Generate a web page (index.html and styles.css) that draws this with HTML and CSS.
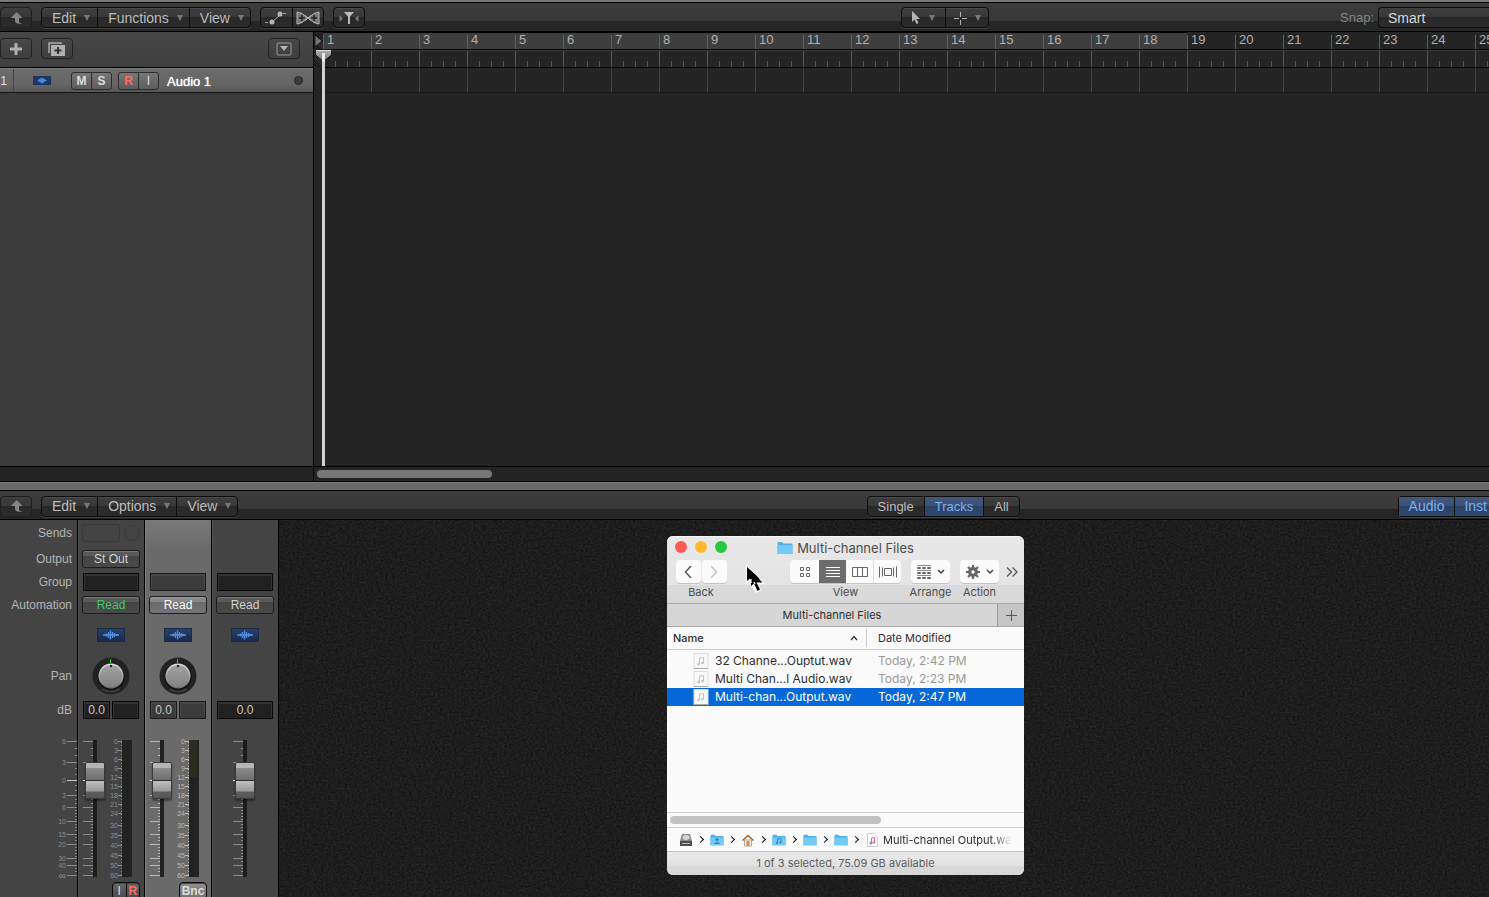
FILE: index.html
```html
<!DOCTYPE html>
<html lang="en">
<head>
  <meta charset="UTF-8" />
  <meta name="viewport" content="width=device-width, initial-scale=1.0" />
  <title>Tracks</title>
  <link rel="stylesheet" href="styles.css">
</head>
<body>

  <!-- shared drawings -->
  <svg class="defs" width="0" height="0" aria-hidden="true">
    <defs>
      <linearGradient id="knobFill" x1="0" y1="0" x2="0" y2="1">
        <stop offset="0" stop-color="#a2a2a2" />
        <stop offset="1" stop-color="#828282" />
      </linearGradient>
      <linearGradient id="knobRim" x1="0" y1="0" x2="0" y2="1">
        <stop offset="0" stop-color="#e8e8e8" />
        <stop offset="1" stop-color="#6c6c6c" />
      </linearGradient>
      <linearGradient id="waveFill" x1="0" y1="0" x2="0" y2="1">
        <stop offset="0" stop-color="#2a416c" />
        <stop offset="1" stop-color="#182a4a" />
      </linearGradient>
      <linearGradient id="headFill" x1="0" y1="0" x2="0" y2="1">
        <stop offset="0" stop-color="#b4b4b4" />
        <stop offset="1" stop-color="#747474" />
      </linearGradient>
      <filter id="leather" x="0" y="0" width="100%" height="100%" color-interpolation-filters="sRGB">
        <feTurbulence type="fractalNoise" baseFrequency="0.42 0.5" numOctaves="2" seed="4" />
        <feColorMatrix values="0.12 0 0 0 0.055  0.12 0 0 0 0.055  0.12 0 0 0 0.055  0 0 0 0 1" />
      </filter>
    </defs>
    <symbol id="up" viewBox="0 0 14 14">
      <path d="M7.500 1 L13.500 7 H10 V10 Q10 12 13.500 12.500 Q6 13.500 6 9.500 V7 H2 Z" fill="#858585" />
    </symbol>
    <symbol id="wave" viewBox="0 0 28 14">
      <rect x="0.500" y="0.500" width="27" height="13" fill="url(#waveFill)" stroke="#1c2a45" />
      <path d="M7.500 6.500v1M9.500 5.500v3M11.500 4v6M13.500 2.500v9M15.500 4v6M17.500 5v4M19.500 6v2M6 7h16" stroke="#5590e0" stroke-width="1.300" fill="none" />
    </symbol>
    <symbol id="knob" viewBox="0 0 38 38">
      <circle cx="19" cy="19" r="18.500" fill="#222" />
      <path d="M10 33 Q19 38 28 33 L26 30 H12 Z" fill="#3c3c3c" />
      <circle cx="19" cy="20" r="13.500" fill="#111" />
      <circle cx="19" cy="19" r="12.500" fill="url(#knobRim)" />
      <circle cx="19" cy="19" r="11" fill="url(#knobFill)" />
      <rect x="18" y="2" width="1" height="4" fill="#1fd01f" />
      <circle cx="19" cy="9" r="1.200" fill="#222" />
    </symbol>
    <symbol id="faderTicks" viewBox="0 0 10 160">
      <path d="M0 21.500h10M0 42.500h10M0 75.500h10M0 87.500h10M0 101.500h10M0 114.500h10M0 124.500h10M0 138.500h10M0 145.500h10M0 155.500h10" stroke="currentColor" />
      <path d="M8 28.500h2M8 35.500h2M8 48.500h2M8 54.500h2M8 65.500h2M8 70.500h2M8 79.500h2M8 83.500h2M8 90.500h2M8 93.500h2M8 96.500h2M8 99.500h2M8 104.500h2M8 107.500h2M8 110.500h2M8 117.500h2M8 120.500h2M8 127.500h2M8 130.500h2M8 133.500h2M8 136.500h2M8 141.500h2M8 148.500h2M8 151.500h2" stroke="currentColor" />
    </symbol>
    <symbol id="meterTicks" viewBox="0 0 4 160">
      <path d="M0 21.500h4M0 30.500h4M0 39.500h4M0 48.500h4M0 57.500h4M0 66.500h4M0 75.500h4M0 84.500h4M0 93.500h4M0 105.500h4M0 115.500h4M0 125.500h4M0 135.500h4M0 145.500h4M0 155.500h4" stroke="currentColor" />
      <path d="M3.500 22v134" stroke="currentColor" stroke-dasharray="1 2" />
    </symbol>
    <symbol id="folder" viewBox="0 0 16 14">
      <path d="M0.500 2 Q0.500 1 1.500 1 H5 L6.500 2.500 H14.500 Q15.500 2.500 15.500 3.500 V13 H0.500 Z" fill="#54aee0" />
      <path d="M0.500 4.200 H15.500 V13 H0.500 Z" fill="#72cbf7" />
    </symbol>
    <symbol id="note" viewBox="0 0 16 16">
      <rect x="1" y="0.500" width="14" height="15" fill="#f8f8f8" stroke="#dcdcdc" />
      <path d="M1 15.500h14" stroke="#aaa" />
      <path d="M6.500 11V5L10.500 4.500V10" fill="none" stroke="#c4c4c4" />
      <circle cx="5.500" cy="11" r="1.300" fill="#c4c4c4" /><circle cx="9.500" cy="10" r="1.300" fill="#c4c4c4" />
    </symbol>
  </svg>

  <header class="toolbar">
    <div class="tools-left">
      <button class="btn up" aria-label="Up"><svg width="14" height="14"><use href="#up" /></svg></button>
      <div class="group menus">
        <button>Edit<i></i></button>
        <button>Functions<i></i></button>
        <button>View<i></i></button>
      </div>
      <div class="group icons">
        <button aria-label="Automation">
          <svg width="24" height="14" viewBox="0 0 24 14"><path d="M1 11.500H4M19 2.500H23" stroke="#999" stroke-dasharray="3 1" fill="none" /><path d="M7 11.500L17 3.500" stroke="#aaa" /><circle cx="8" cy="11" r="2.500" fill="#b5b5b5" /><circle cx="16" cy="3" r="2.500" fill="#b5b5b5" /></svg>
        </button>
        <button aria-label="Flex">
          <svg width="24" height="14" viewBox="0 0 24 14"><path d="M1 1C8 1 16 13 23 13V1C16 1 8 13 1 13Z" fill="#777" stroke="#b5b5b5" /><path d="M3 7h6M15 7h6M6 4v6M18 4v6" stroke="#222" stroke-width="1.500" /><path d="M9 4.500L12 7L9 9.500M15 4.500L12 7L15 9.500" stroke="#bbb" fill="none" /></svg>
        </button>
      </div>
      <button class="btn" aria-label="Catch">
        <svg width="20" height="14" viewBox="0 0 20 14"><path d="M5 1H15L11 5.500V13H9V5.500Z" fill="#bbb" /><path d="M0.500 4V11L4 7.500ZM19.500 4V11L16 7.500Z" fill="#777" /></svg>
      </button>
    </div>
    <div class="group tools">
      <button aria-label="Pointer tool">
        <svg width="10" height="14" viewBox="0 0 10 14"><path d="M1 0V11L3.500 8.500L5.500 13L7.500 12L5.500 8H9Z" fill="#b5b5b5" /></svg><i></i>
      </button>
      <button aria-label="Marquee tool">
        <svg width="14" height="14" viewBox="0 0 14 14"><path d="M7.500 1v5M7.500 9v5M1 7.500h5M9 7.500h5" stroke="#b5b5b5" /></svg><i></i>
      </button>
    </div>
    <div class="snap">
      <label for="snap">Snap:</label>
      <select id="snap"><option>Smart</option></select>
    </div>
  </header>

  <main class="arrange">
    <section class="track-list">
      <div class="list-head">
        <button class="btn" aria-label="Add track"><svg width="14" height="14" viewBox="0 0 14 14"><path d="M7 1v12M1 7h12" stroke="#b0b0b0" stroke-width="3" /></svg></button>
        <button class="btn dup" aria-label="Duplicate track"><svg width="18" height="14" viewBox="0 0 18 14"><path d="M1 11V1H14" stroke="#aaa" fill="none" stroke-width="1.500" /><rect x="3" y="3" width="14" height="11" fill="#b0b0b0" /><path d="M10 5v7M6.500 8.500h7" stroke="#333" stroke-width="2" /></svg></button>
        <button class="btn drop" aria-label="Track header options"><svg width="16" height="14" viewBox="0 0 16 14"><rect x="1" y="1" width="14" height="12" rx="1" fill="none" stroke="#999" /><path d="M4 4H12L8 9Z" fill="#b5b5b5" /></svg></button>
      </div>
      <div class="track">
        <span class="num">1</span>
        <svg class="track-icon" width="18" height="9" viewBox="0 0 18 9"><rect width="18" height="9" fill="#1d355f" /><path d="M4 4.500L9 1.500L14 4.500L9 7.500Z" fill="#4686df" /></svg>
        <div class="group ms"><button>M</button><button>S</button></div>
        <div class="group ri"><button class="rec">R</button><button>I</button></div>
        <span class="track-name">Audio 1</span>
        <span class="dot"></span>
      </div>
    </section>

    <section class="timeline">
      <div class="ruler">
        <ol class="bars cycle"><li>1</li><li>2</li><li>3</li><li>4</li><li>5</li><li>6</li><li>7</li><li>8</li><li>9</li><li>10</li><li>11</li><li>12</li><li>13</li><li>14</li><li>15</li><li>16</li><li>17</li><li>18</li></ol>
        <ol class="bars"><li>19</li><li>20</li><li>21</li><li>22</li><li>23</li><li>24</li><li>25</li></ol>
      </div>
      <div class="beats"></div>
      <div class="lane"></div>
      <svg class="start-mark" width="9" height="34" viewBox="0 0 9 34"><path d="M1 2V14L8 8Z" fill="#777" stroke="#161616" /></svg>
      <div class="playhead">
        <svg width="17" height="13" viewBox="0 0 17 13"><path d="M0.500 0.500H16.500V6L8.500 12.500L0.500 6Z" fill="url(#headFill)" stroke="#161616" /><path d="M1 1.500H16" stroke="#ddd" /><rect x="7" y="4" width="3" height="9" fill="#e8e8e8" /></svg>
      </div>
    </section>
  </main>

  <div class="scroll-row"><div class="scroll-side"></div><div class="scroll-track"><div class="thumb"></div></div></div>
  <div class="splitter"></div>

  <header class="toolbar mixer-bar">
    <div class="tools-left">
      <button class="btn up" aria-label="Up"><svg width="14" height="14"><use href="#up" /></svg></button>
      <div class="group menus">
        <button>Edit<i></i></button>
        <button>Options<i></i></button>
        <button>View<i></i></button>
      </div>
    </div>
    <div class="group tabs">
      <button>Single</button><button class="on">Tracks</button><button>All</button>
    </div>
    <div class="group filters"><button class="on">Audio</button><button class="on">Inst</button></div>
  </header>

  <section class="mixer">
    <svg class="leather" aria-hidden="true"><rect width="100%" height="100%" filter="url(#leather)" /></svg>

    <div class="strip labels">
      <div class="r-sends">Sends</div>
      <div class="r-output">Output</div>
      <div class="r-group">Group</div>
      <div class="r-auto">Automation</div>
      <div class="r-icon"></div>
      <div class="r-pan">Pan</div>
      <div class="r-db">dB</div>
      <svg class="scale" width="77" height="160" viewBox="0 0 77 160">
        <text x="66" y="24">6</text><text x="66" y="45">3</text><text x="66" y="63">0</text><text x="66" y="78">3</text>
        <text x="66" y="90">6</text><text x="66" y="104">10</text><text x="66" y="117">15</text><text x="66" y="127">20</text>
        <text x="66" y="141">30</text><text x="66" y="148">40</text><text class="inf" x="66" y="159">∞</text>
        <use href="#faderTicks" x="67" width="10" height="160" />
        <path d="M67 60.500h10" stroke="#ccc" />
      </svg>
    </div>

    <div class="strip">
      <div class="r-sends"><span class="send"></span><span class="send-knob"></span></div>
      <div class="r-output"><button class="slot">St Out</button></div>
      <div class="r-group"><span class="field"></span></div>
      <div class="r-auto"><button class="slot read">Read</button></div>
      <div class="r-icon"><svg width="28" height="14"><use href="#wave" /></svg></div>
      <div class="r-pan"><svg width="38" height="38"><use href="#knob" /></svg></div>
      <div class="r-db"><span class="field">0.0</span><span class="field"></span></div>
      <div class="fader">
        <svg width="66" height="160">
          <use href="#faderTicks" x="5" width="10" height="160" />
          <path d="M5 60.500h5" stroke="#fff" />
          <rect x="15" y="20" width="4" height="137" fill="#1c1c1c" />
          <text x="40" y="24">0</text><text x="40" y="33">3</text><text x="40" y="42">6</text>
          <text x="40" y="51">9</text><text x="40" y="60">12</text><text x="40" y="69">15</text>
          <text x="40" y="78">18</text><text x="40" y="87">21</text><text x="40" y="96">24</text>
          <text x="40" y="108">30</text><text x="40" y="118">35</text><text x="40" y="128">40</text>
          <text x="40" y="138">45</text><text x="40" y="148">50</text><text x="40" y="158">60</text>
          <use href="#meterTicks" x="40" width="4" height="160" />
          <rect x="44" y="20" width="10" height="137" fill="#222" />
        </svg>
        <input type="range" min="0" max="100" value="78" aria-label="Audio 1 volume">
      </div>
      <div class="r-foot"><div class="group"><button>I</button><button class="rec">R</button></div></div>
    </div>

    <div class="strip selected">
      <div class="r-sends"></div>
      <div class="r-output"></div>
      <div class="r-group"><span class="field"></span></div>
      <div class="r-auto"><button class="slot">Read</button></div>
      <div class="r-icon"><svg width="28" height="14"><use href="#wave" /></svg></div>
      <div class="r-pan"><svg width="38" height="38"><use href="#knob" /></svg></div>
      <div class="r-db"><span class="field">0.0</span><span class="field"></span></div>
      <div class="fader">
        <svg width="66" height="160">
          <use href="#faderTicks" x="5" width="10" height="160" />
          <path d="M5 60.500h5" stroke="#fff" />
          <rect x="15" y="20" width="4" height="137" fill="#222" />
          <text x="40" y="24">0</text><text x="40" y="33">3</text><text x="40" y="42">6</text>
          <text x="40" y="51">9</text><text x="40" y="60">12</text><text x="40" y="69">15</text>
          <text x="40" y="78">18</text><text x="40" y="87">21</text><text x="40" y="96">24</text>
          <text x="40" y="108">30</text><text x="40" y="118">35</text><text x="40" y="128">40</text>
          <text x="40" y="138">45</text><text x="40" y="148">50</text><text x="40" y="158">60</text>
          <use href="#meterTicks" x="40" width="4" height="160" />
          <rect x="44" y="20" width="10" height="137" fill="#222" />
          <rect x="44" y="20" width="8" height="37" fill="#2c2b20" />
        </svg>
        <input type="range" min="0" max="100" value="78" aria-label="Output volume">
      </div>
      <div class="r-foot"><div class="group"><button>Bnc</button></div></div>
    </div>

    <div class="strip master">
      <div class="r-sends"></div>
      <div class="r-output"></div>
      <div class="r-group"><span class="field"></span></div>
      <div class="r-auto"><button class="slot">Read</button></div>
      <div class="r-icon"><svg width="28" height="14"><use href="#wave" /></svg></div>
      <div class="r-pan"></div>
      <div class="r-db"><span class="field">0.0</span></div>
      <div class="fader">
        <svg width="66" height="160">
          <use href="#faderTicks" x="21" width="10" height="160" />
          <path d="M21 60.500h5" stroke="#fff" />
          <rect x="31" y="20" width="4" height="137" fill="#1c1c1c" />
        </svg>
        <input type="range" min="0" max="100" value="78" aria-label="Master volume">
      </div>
    </div>
  </section>

  <section class="finder">
    <div class="finder-top">
      <div class="title-row">
        <div class="lights"><button class="red" aria-label="Close"></button><button class="yellow" aria-label="Minimize"></button><button class="green" aria-label="Zoom"></button></div>
        <h1><svg width="16" height="14"><use href="#folder" /></svg>Multi-channel Files</h1>
      </div>
      <div class="finder-tools">
        <div class="tool back">
          <div class="pills">
            <button aria-label="Back"><svg width="8" height="12" viewBox="0 0 8 12"><path d="M7 0L1.500 6L7 12" fill="none" stroke="#555" stroke-width="1.500" /></svg></button>
            <button aria-label="Forward"><svg width="8" height="12" viewBox="0 0 8 12"><path d="M1 0L6.500 6L1 12" fill="none" stroke="#c4c4c4" stroke-width="1.500" /></svg></button>
          </div>
          <span>Back</span>
        </div>
        <div class="tool view">
          <div class="segments">
            <button aria-label="Icons"><svg width="12" height="12" viewBox="0 0 12 12"><path d="M1.500 1.500h3v3h-3zM7.500 1.500h3v3h-3zM1.500 7.500h3v3h-3zM7.500 7.500h3v3h-3z" fill="none" stroke="#666" /></svg></button>
            <button class="active" aria-label="List"><svg width="14" height="12" viewBox="0 0 14 12"><path d="M0 1.500h14M0 4.500h14M0 7.500h14M0 10.500h14" stroke="#fff" /></svg></button>
            <button aria-label="Columns"><svg width="16" height="12" viewBox="0 0 16 12"><path d="M0.500 1.500h15v9h-15zM5.500 1.500v9M10.500 1.500v9" fill="none" stroke="#666" /></svg></button>
            <button aria-label="Cover flow"><svg width="18" height="12" viewBox="0 0 18 12"><path d="M5.500 2.500h7v7h-7zM0.500 0.500v11M3.500 1.500v9M14.500 1.500v9M17.500 0.500v11" fill="none" stroke="#666" /></svg></button>
          </div>
          <span>View</span>
        </div>
        <div class="tool">
          <button class="pull" aria-label="Arrange">
            <svg width="14" height="14" viewBox="0 0 14 14"><path d="M0 .5h14M0 5.500h14M0 10.500h14" stroke="#888" /><path d="M.5 2.500h3v1h-3zM5.500 2.500h3v1h-3zM10.500 2.500h3v1h-3zM.5 7.500h3v1h-3zM5.500 7.500h3v1h-3zM10.500 7.500h3v1h-3zM.5 12.500h3v1h-3zM5.500 12.500h3v1h-3zM10.500 12.500h3v1h-3z" fill="none" stroke="#666" /></svg>
            <svg width="8" height="6" viewBox="0 0 8 6"><path d="M1 1L4 4L7 1" fill="none" stroke="#444" stroke-width="1.500" /></svg>
          </button>
          <span>Arrange</span>
        </div>
        <div class="tool">
          <button class="pull" aria-label="Action">
            <svg width="14" height="14" viewBox="0 0 14 14"><path d="M7 0v14M0 7h14M2 2l10 10M12 2L2 12" stroke="#666" stroke-width="2.200" /><circle cx="7" cy="7" r="3.300" fill="#fbfbfb" stroke="#666" stroke-width="3.200" /></svg>
            <svg width="8" height="6" viewBox="0 0 8 6"><path d="M1 1L4 4L7 1" fill="none" stroke="#444" stroke-width="1.500" /></svg>
          </button>
          <span>Action</span>
        </div>
        <button class="more" aria-label="More"><svg width="12" height="10" viewBox="0 0 12 10"><path d="M1 .5L5.500 5L1 9.500M6.500 .5L11 5L6.500 9.500" fill="none" stroke="#555" stroke-width="1.300" /></svg></button>
      </div>
    </div>
    <div class="finder-tabs">
      <button class="tab">Multi-channel Files</button>
      <button class="add" aria-label="New tab"><svg width="11" height="11" viewBox="0 0 11 11"><path d="M5.500 0v11M0 5.500h11" stroke="#555" /></svg></button>
    </div>
    <div class="files">
      <table>
        <thead>
          <tr><th class="name"><div>Name<svg width="8" height="6" viewBox="0 0 8 6"><path d="M1 5L4 1.500L7 5" fill="none" stroke="#333" stroke-width="1.300" /></svg></div></th><th><div>Date Modified</div></th></tr>
        </thead>
        <tbody>
          <tr><td class="name"><div><svg width="16" height="16"><use href="#note" /></svg>32 Channe...Ouptut.wav</div></td><td>Today, 2:42 PM</td></tr>
          <tr><td class="name"><div><svg width="16" height="16"><use href="#note" /></svg>Multi Chan...l Audio.wav</div></td><td>Today, 2:23 PM</td></tr>
          <tr class="picked"><td class="name"><div><svg width="16" height="16"><use href="#note" /></svg>Multi-chan...Output.wav</div></td><td>Today, 2:47 PM</td></tr>
        </tbody>
      </table>
    </div>
    <div class="finder-scroll"><div></div></div>
    <div class="path">
      <svg width="14" height="14" viewBox="0 0 14 14"><path d="M3 1H11L13 8V13H1V8Z" fill="#8c8c8c" /><path d="M1 8h12v5H1z" fill="#4e4e4e" /><ellipse cx="7" cy="4.500" rx="3.500" ry="2.500" fill="#d5d5d5" /><path d="M3 10.500h8" stroke="#bbb" /></svg><b></b>
      <span class="pf"><svg width="14" height="14"><use href="#folder" /></svg><svg class="over" width="14" height="14" viewBox="0 0 14 14"><circle cx="7" cy="6.500" r="1.500" fill="#2b86b8" /><path d="M4 11Q7 7 10 11Z" fill="#2b86b8" /></svg></span><b></b>
      <svg width="14" height="14" viewBox="0 0 14 14"><path d="M3.500 7h7v6h-7z" fill="#eee" stroke="#aaa" /><path d="M1.500 7.500L7 2.500L12.500 7.500" fill="none" stroke="#a5672f" stroke-width="1.600" /><path d="M5.500 8h3v5h-3z" fill="#f08a24" /></svg><b></b>
      <span class="pf"><svg width="14" height="14"><use href="#folder" /></svg><svg class="over" width="14" height="14" viewBox="0 0 14 14"><path d="M5.500 10V6L9 5.500V9.500" fill="none" stroke="#2b86b8" /><circle cx="5" cy="10" r="1" fill="#2b86b8" /><circle cx="8.500" cy="9.500" r="1" fill="#2b86b8" /></svg></span><b></b>
      <svg width="14" height="14"><use href="#folder" /></svg><b></b>
      <svg width="14" height="14"><use href="#folder" /></svg><b></b>
      <svg width="14" height="14" viewBox="0 0 14 14"><path d="M2.500 .5H9L12.500 4V13.500H2.500Z" fill="#fff" stroke="#ccc" /><path d="M6.500 10V5L9.500 4.500V9.500" fill="none" stroke="#e0679a" /><circle cx="6" cy="10" r="1.500" fill="#6a8fe8" /><circle cx="9" cy="9.500" r="1.200" fill="#ee6f6f" /></svg>
      <span class="path-name">Multi-channel Output.wav</span>
    </div>
    <div class="status">1 of 3 selected, 75.09 GB available</div>
    <svg class="cursor" width="22" height="30" viewBox="0 0 22 30"><path d="M1 0V19L5 16L8 24L11 28L16 25L13 19H20L12 10Z" fill="#fff" /><path d="M2 2V16L5 13.500L6 16L9 13L15 14.500L12 11Z" fill="#000" /><path d="M6 8V21L9 18.500L12.500 26L15 24.500L11.500 17.500H17.500L12 12Z" fill="#000" /><path d="M6 14V18M9 17L10 19" stroke="#fff" stroke-width="1.200" /></svg>
  </section>

</body>
</html>
```

FILE: styles.css
```css
:root {
  --line: #0c0c0c;
  --panel: #444;
  --dark: #242424;
  --text: #bdbdbd;
  --bar: 48px;
}

* {
  box-sizing: border-box;
}

body {
  margin: 0;
  height: 100vh;
  min-height: 600px;
  display: flex;
  flex-direction: column;
  overflow: hidden;
  position: relative;
  background: #1b1b1b;
  color: var(--text);
  font-family: "Liberation Sans", Arial, sans-serif;
  font-size: 14px;
}

button, select {
  font: inherit;
  color: inherit;
  border: 0;
  padding: 0;
  margin: 0;
  background: none;
}

svg {
  display: block;
  flex: none;
}

.defs {
  position: absolute;
}

/* toolbars */
.toolbar {
  flex: none;
  height: 32px;
  display: flex;
  align-items: center;
  overflow: hidden;
  padding-top: 2px;
  border-top: 2px solid #777;
  border-bottom: 1px solid #000;
  box-shadow: inset 0 1px 0 #000;
  background: linear-gradient(#3c3c3c, #383838 19px, #252525 19px);
}

.mixer-bar {
  height: 29px;
  border-top: 0;
  box-shadow: none;
  background: linear-gradient(#3c3c3c, #383838 18px, #252525 18px);
}

.tools-left {
  flex: 0 0 60.5%;
  display: flex;
}

.mixer-bar .tools-left {
  flex-basis: 58.2%;
}

.btn, .group {
  display: flex;
  align-items: center;
  height: 21px;
  border: 1px solid var(--line);
  border-radius: 4px;
  box-shadow: 0 1px 0 #3e3e3e, inset 0 1px 0 #4a4a4a;
  background: linear-gradient(#3e3e3e, #383838 50%, #282828 50%, #2c2c2c);
}

.btn {
  width: 32px;
  justify-content: center;
}

.btn.up {
  margin-right: 9px;
  border-color: #1f1f1f;
  box-shadow: none;
}

.group button {
  height: 100%;
  display: flex;
  align-items: center;
  justify-content: center;
}

.group button + button {
  border-left: 1px solid var(--line);
}

.menus button {
  padding: 0 6px 0 10px;
}

.menus button:first-child {
  padding-right: 7px;
}

.group i {
  border: 3px solid transparent;
  border-top: 6px solid #777;
  border-bottom: 0;
  margin-left: 8px;
}

.icons {
  margin: 0 9px;
}

.icons button {
  width: 31px;
}

.tools button {
  width: 43px;
}

.snap {
  margin-left: auto;
  display: flex;
  align-items: center;
  gap: 4px;
  color: #858585;
  font-size: 13px;
}

.snap select {
  appearance: none;
  width: 111px;
  height: 21px;
  padding-left: 9px;
  color: #d8d8d8;
  font-size: 14px;
  border: 1px solid var(--line);
  border-right: 0;
  border-radius: 4px 0 0 4px;
  background: linear-gradient(#3e3e3e, #383838 50%, #282828 50%, #2c2c2c);
}

.tabs {
  font-size: 13px;
}

.tabs button {
  padding: 0 10px;
}

.group .on {
  color: #7db0f5;
  background: linear-gradient(#43587a, #3b5175 50%, #2c4265 50%, #304870);
}

.filters {
  margin-left: auto;
  border-right: 0;
  border-radius: 4px 0 0 4px;
}

.filters button {
  padding: 0 10px;
}

.filters button + button {
  padding: 0 2px 0 9px;
}

/* track area */
.arrange {
  flex: none;
  height: 434px;
  display: flex;
}

.track-list {
  flex: none;
  width: 314px;
  border-right: 1px solid #000;
  background: #3b3b3b;
}

.list-head {
  height: 36px;
  display: flex;
  align-items: center;
  padding: 0 13px 2px 0;
  border-bottom: 1px solid #000;
  background: linear-gradient(#464646, #404040);
}

.list-head .btn {
  background: linear-gradient(#484848, #3e3e3e);
  border-color: #222;
}

.list-head .dup {
  margin-left: 9px;
}

.list-head .drop {
  margin-left: auto;
}

.track {
  height: 25px;
  display: flex;
  align-items: center;
  border-top: 1px solid #7d7d7d;
  border-bottom: 1px solid #161616;
  background: linear-gradient(#6b6b6b, #656565 70%, #555);
  color: #fff;
  font-size: 13px;
}

.num {
  width: 14px;
  height: 100%;
  line-height: 24px;
  border-right: 1px solid #444;
  color: #ddd;
}

.track-icon {
  margin: 0 20px 0 19px;
}

.track .group {
  height: 18px;
  border-color: #2c2c2c;
  border-radius: 3px;
  box-shadow: none;
  background: linear-gradient(#777, #5c5c5c);
  color: #ddd;
  font-size: 12px;
}

.track .group button {
  width: 19px;
}

.track .ms button {
  font-weight: bold;
}

.track .group button + button {
  width: 20px;
  border-color: #2c2c2c;
}

.ri {
  margin-left: 6px;
}

.track .group .rec, .r-foot .rec {
  color: #ff6d65;
  font-weight: bold;
}

.track-name {
  margin-left: 8px;
  padding-top: 2px;
  text-shadow: 0 0 1px #fff;
}

.dot {
  width: 9px;
  height: 9px;
  margin: 0 10px 0 auto;
  border-radius: 50%;
  border: 1px solid #222;
  background: #3c3c3c;
}

.timeline {
  flex: 1;
  min-width: 0;
  position: relative;
  overflow: hidden;
  padding-left: 9px;
  background: var(--dark);
}

.ruler {
  height: 18px;
  display: flex;
  border-bottom: 1px solid #000;
}

.bars {
  flex: none;
  display: flex;
  margin: 0;
  padding: 3px 0 0;
  list-style: none;
  color: #b0b0b0;
  font-size: 13px;
  line-height: 10px;
}

.bars.cycle {
  background: #3e3e3e;
  box-shadow: inset 0 1px 0 #000;
}

.bars li {
  width: var(--bar);
  padding-left: 3px;
  border-left: 1px solid #606060;
}

.beats {
  height: 18px;
  border-top: 1px solid #3c3c3c;
  border-bottom: 1px solid #000;
  background:
    repeating-linear-gradient(90deg, #555 0 1px, transparent 1px 48px),
    repeating-linear-gradient(90deg, #555 0 1px, transparent 1px 12px) 0 10px no-repeat;
}

.lane {
  height: 25px;
  border-bottom: 1px solid #191919;
  background: repeating-linear-gradient(90deg, #444 0 1px, transparent 1px 48px);
}

.start-mark {
  position: absolute;
  left: 0;
  top: 1px;
  background: repeating-linear-gradient(45deg, #161616 0 1px, #333 1px 2px);
}

.playhead {
  position: absolute;
  left: 8px;
  top: 20px;
  bottom: 0;
  width: 3px;
  background: #d2d2d2;
}

.playhead svg {
  position: absolute;
  left: -7px;
  top: -3px;
}

.scroll-row {
  flex: none;
  height: 16px;
  display: flex;
  border: 1px solid #000;
  border-width: 1px 0;
  background: var(--dark);
}

.scroll-side {
  width: 314px;
  border-right: 1px solid #000;
}

.scroll-track {
  flex: 1;
  padding: 3px;
}

.thumb {
  width: 15%;
  height: 8px;
  border-radius: 4px;
  background: #777;
}

.splitter {
  flex: none;
  height: 9px;
  border-top: 1px solid #7a7a7a;
  border-bottom: 1px solid #000;
  background: #696969;
}

/* mixer */
.mixer {
  flex: 1;
  min-height: 0;
  display: flex;
  position: relative;
  overflow: hidden;
}

.leather {
  position: absolute;
  width: 100%;
  height: 100%;
}

.strip {
  position: relative;
  flex: none;
  width: 67px;
  display: flex;
  flex-direction: column;
  border-right: 1px solid #000;
  background: var(--panel);
  box-shadow: inset 1px 0 0 #555;
  color: #8c8c8c;
  font-size: 12px;
}

.strip.labels {
  width: 78px;
  box-shadow: none;
}

.strip.labels > div {
  justify-content: flex-end;
  padding-right: 5px;
  color: #b5b5b5;
}

.strip.selected {
  background: linear-gradient(#7a7a7a, #6a6a6a 30px);
  box-shadow: inset 1px 0 0 #828282;
  color: #bbb;
}

.strip > div {
  flex: none;
  display: flex;
  align-items: center;
  justify-content: center;
  gap: 2px;
}

.strip .r-sends { height: 26px; }
.strip .r-output { height: 26px; }
.strip .r-group { height: 20px; }
.strip .r-auto { height: 26px; }
.strip .r-icon { height: 34px; }
.strip .r-pan { height: 48px; }
.strip .r-db { height: 20px; }

.strip text {
  fill: currentColor;
  font-size: 7px;
  text-anchor: end;
}

.strip .inf {
  font-size: 10px;
}

.scale {
  color: #8a8a8a;
}

.send {
  width: 38px;
  height: 18px;
  border: 1px solid #3a3a3a;
  border-radius: 3px;
}

.send-knob {
  width: 16px;
  height: 16px;
  margin-left: 2px;
  border: 1px solid #3a3a3a;
  border-radius: 50%;
}

.slot {
  width: 58px;
  height: 18px;
  border: 1px solid #1d1d1d;
  border-radius: 3px;
  box-shadow: inset 0 1px 0 #777;
  background: linear-gradient(#5a5a5a 5px, #444 5px, #4a4a4a);
  color: #d5d5d5;
}

.slot.read {
  color: #4cc76a;
}

.selected .slot {
  box-shadow: inset 0 1px 0 #999;
  background: linear-gradient(#888 5px, #6b6b6b 5px, #747474);
  color: #fff;
}

.field {
  flex: 1;
  max-width: 56px;
  height: 18px;
  line-height: 16px;
  text-align: center;
  border: 1px solid #080808;
  box-shadow: inset 0 1px 0 1px #333;
  background: #212121;
  color: #c8c8c8;
}

.strip:not(.labels) .r-group, .strip:not(.labels) .r-db {
  padding: 0 5px;
}

.selected .field {
  background: #3b3b3b;
  border-color: #1c1c1c;
  box-shadow: inset 0 1px 0 1px #484848;
}

.strip .fader {
  position: relative;
  height: 160px;
  justify-content: flex-start;
}

.fader input {
  appearance: none;
  writing-mode: vertical-lr;
  direction: rtl;
  position: absolute;
  left: 7px;
  top: 20px;
  width: 20px;
  height: 137px;
  margin: 0;
  background: none;
}

.master .fader input {
  left: 23px;
}

.fader input::-webkit-slider-thumb {
  appearance: none;
  width: 20px;
  height: 37px;
  border: 1px solid #3a3a3a;
  border-radius: 2px;
  box-shadow: 0 2px 2px rgba(0, 0, 0, 0.4);
  background: linear-gradient(#b5b5b5 5px, #8c8c8c 5px, #6e6e6e 17px, #2c2c2c 17px, #2c2c2c 18px, #c0c0c0 18px, #999 28px, #5e5e5e 29px, #555);
}

.strip .r-foot {
  padding: 2px 4px 0 0;
  justify-content: flex-end;
}

.r-foot .group {
  width: 28px;
  height: 18px;
  background: linear-gradient(#666, #484848);
  color: #ddd;
}

.r-foot .group button {
  flex: 1;
}

.selected .group {
  background: linear-gradient(#909090, #707070);
  font-weight: bold;
}

/* file window */
.finder {
  position: absolute;
  left: 667px;
  top: 536px;
  width: 357px;
  border-radius: 6px;
  overflow: hidden;
  background: #fafafa;
  color: #2e2e2e;
  font-family: Inter, "Liberation Sans", sans-serif;
  font-size: 12px;
}

.finder-top {
  height: 67px;
  border-top: 1px solid #f6f6f6;
  background: linear-gradient(#e8e8e8, #e4e4e4 48px, #dadada 48px, #d8d8d8);
  color: #4c4c4c;
}

.title-row {
  position: relative;
  height: 22px;
  display: flex;
  align-items: center;
  justify-content: center;
}

.title-row h1 {
  display: flex;
  align-items: center;
  gap: 4px;
  margin: 0;
  font-size: 13px;
  font-weight: 400;
}

.lights {
  position: absolute;
  left: 8px;
  top: 4px;
  display: flex;
  gap: 8px;
}

.lights button {
  width: 12px;
  height: 12px;
  border-radius: 50%;
}

.red { background: #fc5b57; }
.yellow { background: #fdbb2d; }
.green { background: #26c940; }

.finder-tools {
  display: flex;
  align-items: flex-start;
  padding: 1px 5px 0 8px;
  font-size: 11px;
}

.tool {
  display: flex;
  flex-direction: column;
  align-items: center;
  gap: 2px;
  line-height: 14px;
  width: 39px;
  margin-right: 10px;
}

.tool:nth-child(4) {
  margin-right: 6px;
}

.tool.back {
  width: 52px;
  margin-right: auto;
}

.tool.view {
  width: 111px;
}

.pills, .segments {
  display: flex;
  gap: 1px;
}

.finder-tools button {
  height: 23px;
  display: flex;
  align-items: center;
  justify-content: center;
}

.pills button {
  width: 25px;
  border-radius: 4px;
  background: #fbfbfb;
  box-shadow: 0 1px 0 #c4c4c4;
}

.segments {
  gap: 0;
  border-radius: 4px;
  overflow: hidden;
  background: #fbfbfb;
  box-shadow: 0 1px 0 #c4c4c4;
}

.segments button {
  width: 27px;
}

.segments button:first-child {
  width: 29px;
}

.segments button:last-child {
  width: 28px;
  border-left: 1px solid #ddd;
}

.segments .active {
  background: #6d6d6d;
}

.finder-tools .pull {
  width: 39px;
  gap: 6px;
  border-radius: 4px;
  background: #fbfbfb;
  box-shadow: 0 1px 0 #c4c4c4;
}

.tool .pull + span {
  white-space: nowrap;
}

.more {
  width: 14px;
}

.finder-tabs {
  height: 24px;
  display: flex;
  border: 1px solid #a9a9a9;
  border-left: 0;
  border-right: 0;
  background: #d6d6d6;
}

.tab {
  flex: 1;
  font-size: 11px;
}

.add {
  width: 27px;
  display: flex;
  align-items: center;
  justify-content: center;
  border-left: 1px solid #999;
  background: #c6c6c6;
}

.files {
  height: 185px;
}

.files table {
  width: 100%;
  border-collapse: separate;
  border-spacing: 0;
}

.files th {
  height: 23px;
  padding: 0;
  border-bottom: 1px solid #c9c9c9;
  font-size: 11px;
  font-weight: 400;
  text-align: left;
}

.files th div {
  height: 18px;
  padding-left: 11px;
  line-height: 18px;
}

.files .name {
  width: 200px;
}

.files th.name {
  font-weight: 500;
}

.files th.name div {
  display: flex;
  align-items: center;
  justify-content: space-between;
  padding: 0 8px 0 6px;
  border-right: 1px solid #ccc;
}

.files td {
  height: 18px;
  padding: 0 0 0 11px;
  line-height: 18px;
  color: #999;
}

.files tbody::before {
  content: "";
  display: block;
  height: 2px;
}

.files td.name {
  padding-left: 26px;
  color: #2e2e2e;
}

.files td div {
  display: flex;
  align-items: center;
  gap: 6px;
}

.files .picked td, .files .picked td.name {
  background: #0567d8;
  color: #fff;
}

.finder-scroll {
  height: 16px;
  padding: 3px;
  border: 1px solid #d0d0d0;
  border-left: 0;
  border-right: 0;
}

.finder-scroll div {
  width: 60%;
  height: 8px;
  border-radius: 4px;
  background: #c2c2c2;
}

.path {
  height: 24px;
  display: flex;
  align-items: center;
  padding: 0 12px;
  border-bottom: 1px solid #c4c4c4;
  font-size: 11px;
}

.path b {
  width: 5px;
  height: 5px;
  margin: 0 7px 0 5px;
  border: 1px solid #111;
  border-width: 1px 1px 0 0;
  transform: rotate(45deg);
}

.pf {
  position: relative;
}

.over {
  position: absolute;
  left: 0;
  top: 0;
}

.path-name {
  flex: 1;
  margin-left: 4px;
  overflow: hidden;
  white-space: nowrap;
  mask-image: linear-gradient(90deg, #000 85%, transparent);
}

.status {
  height: 23px;
  line-height: 23px;
  text-align: center;
  font-size: 11px;
  color: #5c5c5c;
  background: linear-gradient(#e8e8e8, #e2e2e2 14px, #d8d8d8 14px);
}

.cursor {
  position: absolute;
  left: 78px;
  top: 29px;
}
```
